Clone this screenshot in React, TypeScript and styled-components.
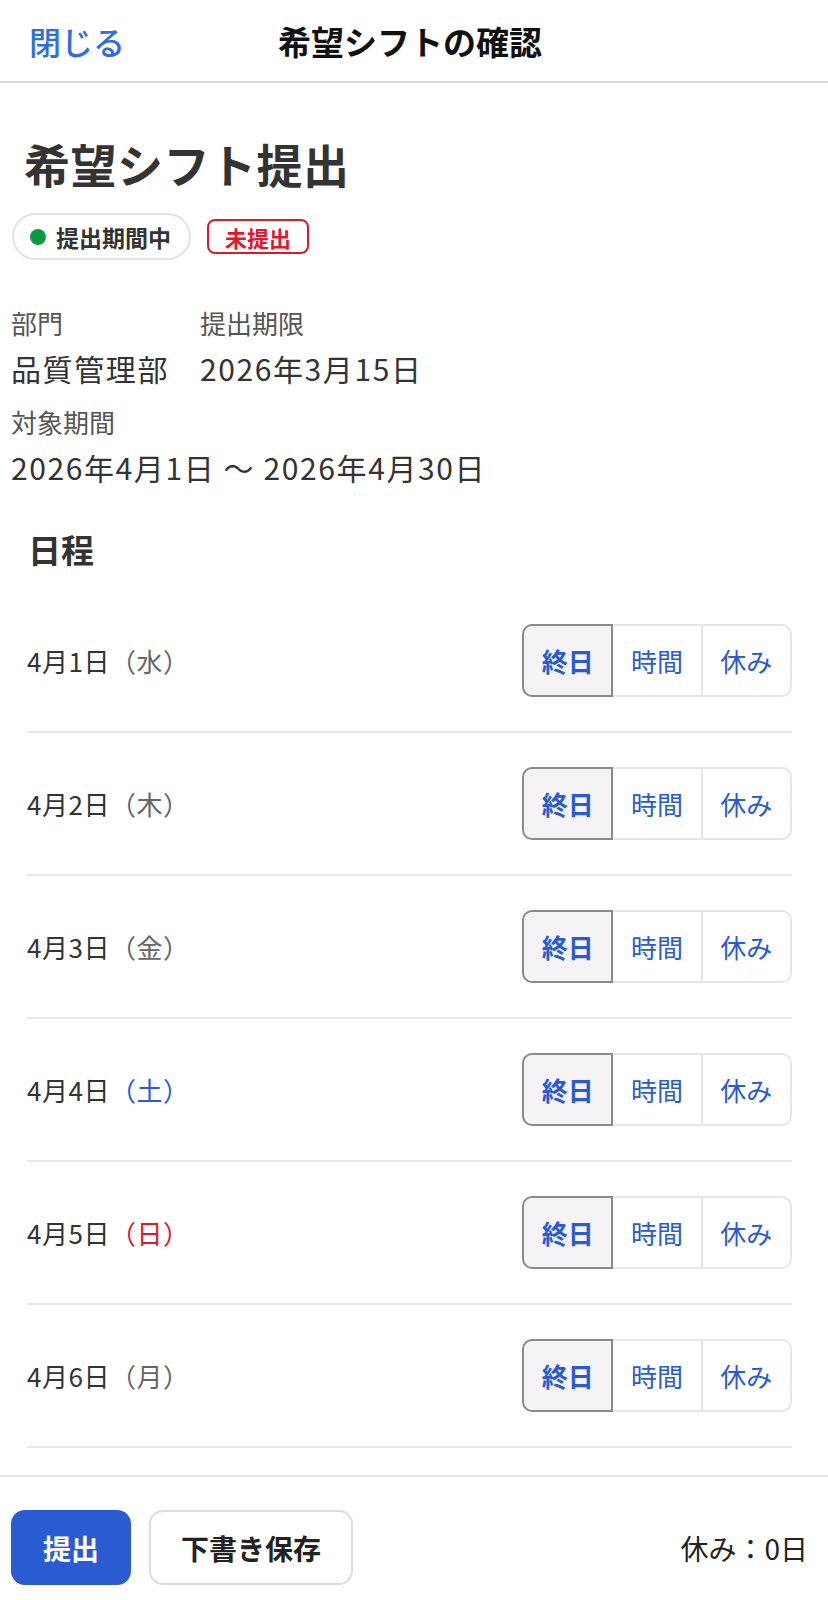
import React from 'react';
import styled, { createGlobalStyle } from 'styled-components';

const GlobalStyle = createGlobalStyle`
  html, body {
    margin: 0;
    padding: 0;
    background: #ffffff;
  }

  body {
    font-family: 'Noto Sans CJK JP', 'Noto Sans', sans-serif;
    color: #333333;
  }
`;

type Choice = 'allday' | 'time' | 'off';

const WEEKDAYS = ['日', '月', '火', '水', '木', '金', '土'];

// 2026-04-01 is a Wednesday. Only the days that fit above the footer are listed.
const days = Array.from({ length: 6 }, (_, i) => ({
  day: i + 1,
  weekday: (3 + i) % 7,
  choice: 'allday' as Choice,
}));

const options: { key: Choice; label: string }[] = [
  { key: 'allday', label: '終日' },
  { key: 'time', label: '時間' },
  { key: 'off', label: '休み' },
];

export default function App() {
  const offCount = days.filter((d) => d.choice === 'off').length;

  return (
    <>
      <GlobalStyle />
      <Screen>
        <Header>
          <CloseLink>閉じる</CloseLink>
          <HeaderTitle>希望シフトの確認</HeaderTitle>
          <span />
        </Header>

        <Main>
          <PageTitle>希望シフト提出</PageTitle>

          <BadgeRow>
            <StatusPill>
              <Dot />
              提出期間中
            </StatusPill>
            <StateTag>未提出</StateTag>
          </BadgeRow>

          <InfoSection>
            <InfoRow>
              <Field>
                <Label>部門</Label>
                <Value>品質管理部</Value>
              </Field>
              <Field>
                <Label>提出期限</Label>
                <Value>2026年3月15日</Value>
              </Field>
            </InfoRow>
            <InfoRow>
              <Field>
                <Label>対象期間</Label>
                <Value>2026年4月1日 〜 2026年4月30日</Value>
              </Field>
            </InfoRow>
          </InfoSection>

          <SectionTitle>日程</SectionTitle>

          <DayList>
            {days.map((d) => (
              <DayRow key={d.day}>
                <DayLabel>
                  4月{d.day}日
                  <Weekday $weekday={d.weekday}>（{WEEKDAYS[d.weekday]}）</Weekday>
                </DayLabel>
                <Segmented>
                  {options.map((o) => (
                    <Segment key={o.key} $active={o.key === d.choice}>
                      {o.label}
                    </Segment>
                  ))}
                </Segmented>
              </DayRow>
            ))}
          </DayList>
        </Main>

        <Footer>
          <SubmitButton>提出</SubmitButton>
          <DraftButton>下書き保存</DraftButton>
          <Summary>休み：{offCount}日</Summary>
        </Footer>
      </Screen>
    </>
  );
}

const Screen = styled.div`
  height: 100vh;
  display: flex;
  flex-direction: column;
  background: #ffffff;
`;

const Header = styled.header`
  height: 81px;
  flex-shrink: 0;
  display: grid;
  grid-template-columns: 1fr auto 1fr;
  align-items: center;
  padding: 0 29px;
  border-bottom: 2px solid #dcdcdc;
  box-sizing: content-box;
`;

const CloseLink = styled.a`
  font-size: 32px;
  font-weight: 500;
  color: #2f6de1;
  cursor: pointer;
`;

const HeaderTitle = styled.h1`
  margin: 0 8px 0 0;
  font-size: 33px;
  font-weight: 700;
  color: #111111;
`;

const Main = styled.main`
  flex: 1;
  overflow: hidden;
`;

const PageTitle = styled.h2`
  margin: 50px 0 0;
  padding-left: 24px;
  font-size: 46px;
  line-height: 60px;
  font-weight: 700;
  color: #333333;
  letter-spacing: 0.5px;
`;

const BadgeRow = styled.div`
  display: flex;
  align-items: center;
  gap: 16px;
  margin: 20px 0 0 12px;
`;

const StatusPill = styled.span`
  display: inline-flex;
  align-items: center;
  gap: 10px;
  height: 47px;
  box-sizing: border-box;
  padding: 0 18px 0 16px;
  border: 2px solid #e3e3e3;
  border-radius: 24px;
  font-size: 23px;
  font-weight: 700;
  color: #333333;
`;

const Dot = styled.span`
  width: 16px;
  height: 16px;
  border-radius: 50%;
  background: #0d9a3e;
`;

const StateTag = styled.span`
  display: inline-flex;
  align-items: center;
  height: 35px;
  box-sizing: border-box;
  padding: 0 16px;
  border: 2px solid #e0182d;
  border-radius: 8px;
  font-size: 22px;
  font-weight: 700;
  color: #e0182d;
`;

const InfoSection = styled.section`
  display: flex;
  flex-direction: column;
  gap: 12px;
  margin-top: 44px;
  padding-left: 11px;
`;

const InfoRow = styled.div`
  display: flex;
  gap: 31px;
`;

const Field = styled.div`
  display: flex;
  flex-direction: column;
  gap: 3px;
`;

const Label = styled.span`
  font-size: 26px;
  line-height: 38px;
  color: #555555;
`;

const Value = styled.span`
  font-size: 30px;
  line-height: 46px;
  letter-spacing: 1.6px;
  color: #333333;
`;

const SectionTitle = styled.h3`
  margin: 36px 0 0;
  padding-left: 28px;
  font-size: 33px;
  line-height: 46px;
  font-weight: 700;
  color: #333333;
`;

const DayList = styled.ul`
  list-style: none;
  margin: 18px 36px 0 27px;
  padding: 0;
`;

const DayRow = styled.li`
  display: flex;
  align-items: center;
  justify-content: space-between;
  padding: 34px 0;
  border-bottom: 2px solid #e8e8e8;
`;

const DayLabel = styled.span`
  font-size: 26px;
  letter-spacing: 0.5px;
  color: #333333;
`;

const Weekday = styled.span<{ $weekday: number }>`
  color: ${({ $weekday }) =>
    $weekday === 6 ? '#2a5bd0' : $weekday === 0 ? '#e0182d' : '#666666'};
`;

const Segmented = styled.div`
  display: flex;
  width: 270px;
  height: 73px;
`;

const Segment = styled.button<{ $active: boolean }>`
  flex: 1;
  position: relative;
  z-index: ${({ $active }) => ($active ? 1 : 0)};
  margin: 0 0 0 -2px;
  padding: 0;
  border: 2px solid ${({ $active }) => ($active ? '#8a8a8a' : '#e6e6e6')};
  background: ${({ $active }) => ($active ? '#f5f3f6' : '#ffffff')};
  font-family: inherit;
  font-size: 26px;
  font-weight: ${({ $active }) => ($active ? 600 : 400)};
  color: #2a5bd0;

  &:first-child {
    margin-left: 0;
    border-radius: 10px 0 0 10px;
  }

  &:last-child {
    border-radius: 0 10px 10px 0;
  }
`;

const Footer = styled.footer`
  flex-shrink: 0;
  display: flex;
  align-items: center;
  gap: 18px;
  padding: 33px 20px 15px 11px;
  border-top: 2px solid #e3e6e6;
`;

const SubmitButton = styled.button`
  width: 120px;
  height: 75px;
  border: none;
  border-radius: 14px;
  background: #2a5bd0;
  font-family: inherit;
  font-size: 28px;
  font-weight: 700;
  color: #ffffff;
`;

const DraftButton = styled.button`
  width: 204px;
  height: 75px;
  border: 2px solid #dddddd;
  border-radius: 14px;
  background: #ffffff;
  font-family: inherit;
  font-size: 28px;
  font-weight: 700;
  color: #222222;
`;

const Summary = styled.span`
  margin-left: auto;
  font-size: 28px;
  color: #222222;
`;
